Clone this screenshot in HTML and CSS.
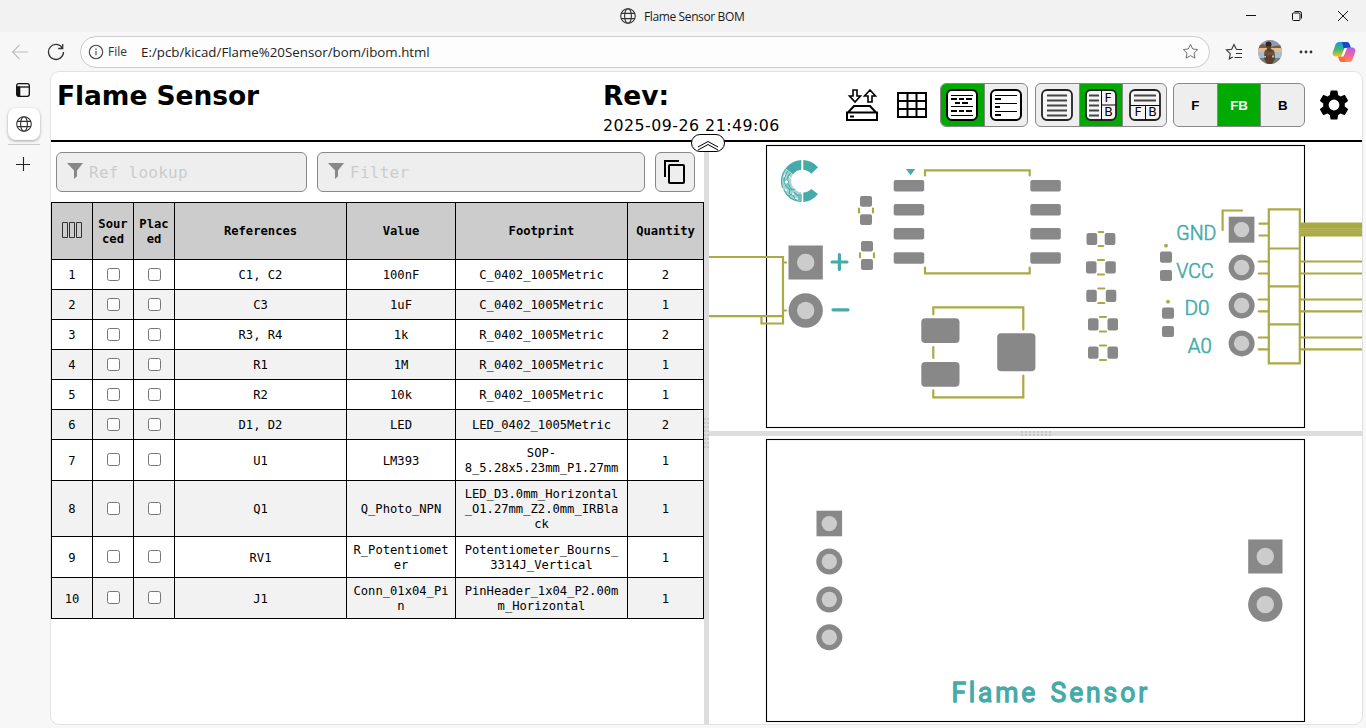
FILE: index.html
```html
<!DOCTYPE html>
<html lang="en">
<head>
<meta charset="utf-8">
<title>Flame Sensor BOM</title>
<link rel="stylesheet" href="styles.css">
</head>
<body>
<svg class="defs" width="0" height="0">
  <defs>
    <symbol id="globe" viewBox="0 0 16 16"><g fill="none" stroke="currentColor" stroke-width="1.1"><circle cx="8" cy="8" r="7.3"/><ellipse cx="8" cy="8" rx="3.4" ry="7.3"/><path d="M1.2 5.4h13.6M1.2 10.6h13.6"/></g></symbol>
    <symbol id="funnel" viewBox="0 0 16 16"><path d="M0 0h16L10 7.6v5.6L7 16V7.6z" fill="#888"/></symbol>
  </defs>
</svg>

<header class="titlebar">
  <div class="tab-title"><svg class="i16"><use href="#globe"/></svg><span>Flame Sensor BOM</span></div>
  <div class="win-buttons">
    <svg viewBox="0 0 12 12"><path d="M1 5.500h10"/></svg>
    <svg viewBox="0 0 12 12"><path d="M1.5 4a1 1 0 0 1 1-1h5.5a1 1 0 0 1 1 1v5.500a1 1 0 0 1-1 1h-5.500a1 1 0 0 1-1-1zM3.500 1.500h5a2 2 0 0 1 2 2v5"/></svg>
    <svg viewBox="0 0 12 12"><path d="M1 1l10 10M11 1L1 11"/></svg>
  </div>
</header>

<nav class="navbar">
  <svg class="back" viewBox="0 0 18 16"><path d="M17 8H1.500M8.500 1L1.500 8l7 7"/></svg>
  <svg class="reload" viewBox="0 0 18 18"><path d="M15.500 5.200A7.500 7.500 0 1 0 16.500 9M15.700 1v4.500h-4.500"/></svg>
  <div class="address">
    <svg class="info" viewBox="0 0 16 16"><circle cx="8" cy="8" r="6.700"/><path d="M8 7v4.200M8 4.600v1.300"/></svg>
    <span class="scheme">File</span>
    <span class="url">E:/pcb/kicad/Flame%20Sensor/bom/ibom.html</span>
    <svg class="star" viewBox="0 0 18 18"><path d="M9 1.400l2.300 4.900 5.300.7-3.900 3.700 1 5.300L9 13.400 4.300 16l1-5.300L1.400 7l5.300-.7z"/></svg>
  </div>
  <svg class="fav" viewBox="0 0 18 18"><path d="M11.500 6.500L9 1.500 6.700 6.300 1.400 7l3.900 3.700-1 5.300 3.500-1.900M11.500 6.500H17M11 10.500h6M9.500 14.500H17"/></svg>
  <svg class="avatar" viewBox="0 0 24 24">
    <clipPath id="face"><circle cx="12" cy="12" r="12"/></clipPath>
    <g clip-path="url(#face)"><rect width="24" height="24" fill="#b9a796"/><rect width="24" height="6" fill="#8f98b5"/><path d="M0 6l5-2 5 3 14-2v4H0z" fill="#715f47"/><rect y="8" width="24" height="4" fill="#e4b98f"/><rect y="12" width="24" height="8" fill="#a9bccd"/><path d="M0 18h24v6H0z" fill="#777c78"/><circle cx="10.500" cy="4.500" r="3" fill="#33231c"/><path d="M9 6h3.500l.5 3 3 1.500 1 8-3 5.500H9l-3-5.500.5-7L9 9z" fill="#5a3f29"/><path d="M7 10l5 2 4-1 1 5-3-1-6 1z" fill="#705034"/><path d="M5.500 16h2.500v1.500H5.500zM14 15.500h2v2h-2z" fill="#9ac2e5"/></g>
  </svg>
  <svg class="dots" viewBox="0 0 14 4"><circle cx="2" cy="2" r="1.400"/><circle cx="7" cy="2" r="1.400"/><circle cx="12" cy="2" r="1.400"/></svg>
  <svg class="copilot" viewBox="0 0 24 22">
    <defs>
      <linearGradient id="ca" x1="0" y1="0" x2="0" y2="1"><stop offset="0" stop-color="#1595f0"/><stop offset=".55" stop-color="#4db86a"/><stop offset="1" stop-color="#f5c713"/></linearGradient>
      <linearGradient id="cb" x1="0" y1="0" x2="0" y2="1"><stop offset="0" stop-color="#a565ef"/><stop offset=".5" stop-color="#f062a5"/><stop offset="1" stop-color="#ff8a4c"/></linearGradient>
    </defs>
    <path d="M7 1h8L9.500 15.500H4C1 15.500 0 13 1 10.500L3.500 3.500Q4.500 1 7 1z" fill="url(#ca)"/>
    <path d="M10 1h5q2 0 2.600 2L19 7h-4q-2 0-3 2z" fill="#1748c5"/>
    <path d="M17 21H9l5.500-14.500H20c3 0 4 2.500 3 5l-2.500 7Q19.500 21 17 21z" fill="url(#cb)"/>
    <path d="M6 15.500h4q1.500 0 2.500-3L13 21H9.500q-2 0-2.500-2.500z" fill="#fb6b3d"/>
    <path d="M12.500 7h2.600L11.500 15.500H9.200z" fill="#fff"/>
  </svg>
</nav>

<div class="workspace">
  <aside class="side">
    <svg class="panel" viewBox="0 0 14 14"><rect x=".7" y=".7" width="12.600" height="12.600" rx="2"/><path d="M.7 4h12.600"/><path class="fill" d="M.7 3.500h3.600v9.800H2a1.300 1.300 0 0 1-1.300-1.300z"/></svg>
    <div class="side-tab"><svg class="i16"><use href="#globe"/></svg></div>
    <div class="side-rule"></div>
    <svg class="plus" viewBox="0 0 14 14"><path d="M7.500 0v14M0 7.500h14"/></svg>
  </aside>

  <main class="page">
    <div class="topbar">
      <div class="doc-title">Flame Sensor</div>
      <div class="rev"><div class="doc-title">Rev:</div><div class="date">2025-09-26 21:49:06</div></div>
      <div class="tools">
        <svg class="save" viewBox="0 0 32 32"><path d="M2 23.500L8 17h16l6 6.500M1 23.500h30V31H1zM4 27.500h4" stroke-width="2"/><path d="M7 1h4v6h3.500L9 13 3.500 7H7zM22 13h4V7h3.500L24 1l-5.500 6H22z" stroke-width="1.600"/></svg>
        <svg class="grid" viewBox="0 0 30 26"><path d="M1 1h28v24H1zM1 9h28M1 17h28M10.500 1v24M19.500 1v24"/></svg>
        <div class="group">
          <div class="btn on"><svg viewBox="0 0 32 32"><rect class="box" x="1" y="1" width="30" height="30" rx="5"/><path d="M5 6.500h22M5 17.500h22M5 26.500h22" stroke-width="1"/><path d="M5 10h6m2 0h5m2 0h6M9 14h5m2 0h6M5 22h6m2 0h5m2 0h6" stroke-width="2"/></svg></div>
          <div class="btn"><svg viewBox="0 0 32 32"><rect class="box" x="1" y="1" width="30" height="30" rx="5"/><path d="M5 6.500h22M5 14.500h22M5 22.500h22" stroke-width="1"/><path d="M5 10h6M5 18h5M5 26h6" stroke-width="2"/></svg></div>
        </div>
        <div class="group g2">
          <div class="btn"><svg viewBox="0 0 32 32"><rect class="box thin" x="1" y="1" width="30" height="30" rx="5"/><path class="gray" d="M6 6.500h20M6 11.500h20M6 16.500h20M6 21.500h20M6 26.500h20"/></svg></div>
          <div class="btn on"><svg viewBox="0 0 32 32"><rect class="box thin" x="1" y="1" width="30" height="30" rx="5"/><path class="gray" d="M4 6.500h10M4 11.500h10M4 16.500h10M4 21.500h10M4 26.500h10"/><path d="M16.500 1v30M16.500 16h14" stroke-width="1"/><text x="19.500" y="13.300">F</text><text x="19.200" y="27.300">B</text></svg></div>
          <div class="btn"><svg viewBox="0 0 32 32"><rect class="box thin" x="1" y="1" width="30" height="30" rx="5"/><path class="gray" d="M5 6.500h22M5 11.500h22"/><path d="M1 16.500h30M16.500 16.500V31" stroke-width="1"/><text x="5.500" y="27.300">F</text><text x="19.200" y="27.300">B</text></svg></div>
        </div>
        <div class="group g3"><div class="btn">F</div><div class="btn on">FB</div><div class="btn">B</div></div>
        <svg class="gear" viewBox="2 2 20 20"><path d="M19.140 12.940c.04-.3.060-.610.060-.940 0-.320-.020-.640-.070-.940l2.030-1.580c.18-.14.230-.41.120-.610l-1.920-3.320c-.12-.22-.37-.29-.59-.22l-2.390.96c-.5-.38-1.030-.7-1.620-.94l-.36-2.540c-.04-.24-.24-.41-.48-.41h-3.840c-.24 0-.43.170-.47.410l-.36 2.540c-.59.240-1.130.570-1.620.940l-2.390-.96c-.22-.08-.47 0-.59.220L2.740 8.870c-.12.210-.08.470.120.610l2.030 1.580c-.05.300-.09.630-.09.940s.020.640.070.940l-2.030 1.580c-.18.140-.23.410-.12.610l1.920 3.320c.12.220.37.290.59.220l2.390-.96c.5.380 1.030.7 1.620.94l.36 2.540c.05.240.24.410.48.410h3.840c.24 0 .44-.17.47-.41l.36-2.540c.59-.24 1.130-.56 1.620-.94l2.390.96c.22.080.47 0 .59-.22l1.920-3.320c.12-.22.070-.47-.12-.61zM12 15.600A3.600 3.600 0 1 1 12 8.400a3.600 3.600 0 0 1 0 7.200z"/></svg>
      </div>
      <div class="collapse"><svg viewBox="0 0 24 12"><path d="M2 8l10-5.500L22 8M2 11l10-5.500L22 11"/></svg></div>
    </div>

    <div class="split">
      <section class="bom">
        <div class="filters">
          <div class="field ref"><svg><use href="#funnel"/></svg><span>Ref lookup</span></div>
          <div class="field filter"><svg><use href="#funnel"/></svg><span>Filter</span></div>
          <div class="copy"><svg viewBox="0 0 24 26"><path d="M2 18V2h14"/><rect x="6" y="6" width="15" height="18" rx="1"/></svg></div>
        </div>
        <table>
          <colgroup><col class="c1"><col class="c1"><col class="c1"><col class="c4"><col class="c5"><col class="c4"><col class="c7"></colgroup>
          <thead><tr><th><svg class="cols" viewBox="0 0 20 16"><path d="M.5.500h5v15h-5zM7.500.500h5v15h-5zM14.500.500h5v15h-5z"/></svg></th><th class="wrap">Sour<br>ced</th><th class="wrap">Plac<br>ed</th><th>References</th><th>Value</th><th>Footprint</th><th>Quantity</th></tr></thead>
          <tbody>
            <tr><td>1</td><td><input type="checkbox"></td><td><input type="checkbox"></td><td>C1, C2</td><td>100nF</td><td>C_0402_1005Metric</td><td>2</td></tr>
            <tr><td>2</td><td><input type="checkbox"></td><td><input type="checkbox"></td><td>C3</td><td>1uF</td><td>C_0402_1005Metric</td><td>1</td></tr>
            <tr><td>3</td><td><input type="checkbox"></td><td><input type="checkbox"></td><td>R3, R4</td><td>1k</td><td>R_0402_1005Metric</td><td>2</td></tr>
            <tr><td>4</td><td><input type="checkbox"></td><td><input type="checkbox"></td><td>R1</td><td>1M</td><td>R_0402_1005Metric</td><td>1</td></tr>
            <tr><td>5</td><td><input type="checkbox"></td><td><input type="checkbox"></td><td>R2</td><td>10k</td><td>R_0402_1005Metric</td><td>1</td></tr>
            <tr><td>6</td><td><input type="checkbox"></td><td><input type="checkbox"></td><td>D1, D2</td><td>LED</td><td>LED_0402_1005Metric</td><td>2</td></tr>
            <tr class="two"><td>7</td><td><input type="checkbox"></td><td><input type="checkbox"></td><td>U1</td><td>LM393</td><td>SOP-<br>8_5.28x5.23mm_P1.27mm</td><td>1</td></tr>
            <tr class="three"><td>8</td><td><input type="checkbox"></td><td><input type="checkbox"></td><td>Q1</td><td>Q_Photo_NPN</td><td>LED_D3.0mm_Horizontal<br>_O1.27mm_Z2.0mm_IRBla<br>ck</td><td>1</td></tr>
            <tr class="two"><td>9</td><td><input type="checkbox"></td><td><input type="checkbox"></td><td>RV1</td><td>R_Potentiomet<br>er</td><td>Potentiometer_Bourns_<br>3314J_Vertical</td><td>1</td></tr>
            <tr class="two"><td>10</td><td><input type="checkbox"></td><td><input type="checkbox"></td><td>J1</td><td>Conn_01x04_Pi<br>n</td><td>PinHeader_1x04_P2.00m<br>m_Horizontal</td><td>1</td></tr>
          </tbody>
        </table>
      </section>
      <div class="gutter v"><i></i></div>
      <section class="boards">
        <svg class="front" viewBox="709 142 653 289">
          <rect class="edge" x="766.500" y="145.500" width="538" height="282"/>
          <!-- photo transistor outline -->
          <g class="silk"><path d="M709 257H783V323.500H761.500V316.200M709 316.200H783M783 262.500h3M783 310.500h3"/></g>
          <!-- SOP-8 outline, potentiometer outline -->
          <g class="silk"><path d="M925 175.500V170.300H1029.700V175.500M925 267.500V273.300H1029.700V267.500M933.300 314.300V307.300H1023.300V329.500M933.300 347V358M933.300 390.300V397.300H1023.300V375.700"/>
          <path d="M859 208.500v4M873 208.500v4M860 253.300v4M874 253.300v4"/>
          <path d="M1098.700 232h4.500M1098.700 246h4.500M1098 260h6M1098 274.500h6M1098.300 288.500h6M1098.300 303h6M1100 317h6M1100 331.500h6M1100 345.500h6M1100 360h6"/></g>
          <!-- pin header -->
          <g class="silk"><path d="M1242 210.500H1222.600V230M1268.800 209.300H1299.800V363.300H1268.800ZM1268.800 248.500h31M1268.800 286.300h31M1268.800 324.300h31"/>
          <path d="M1259.500 223.700h9M1259.500 235.500h9M1258.700 261.500h10M1258.700 273.500h10M1258.700 299.500h10M1258.700 311.300h10M1258.700 337.500h10M1258.700 349.300h10M1299.800 261.500h63M1299.800 273.500h63M1299.800 299.500h63M1299.800 311.300h63M1299.800 337.500h63M1299.800 349.300h63"/></g>
          <rect x="1299" y="222.500" width="64" height="14" fill="#aa4"/>
          <path d="M1299 228.500h64M1299 230.700h64M1299 233h64" stroke="#bcbc6c" stroke-width=".6"/>
          <g fill="#aa4"><circle cx="1166" cy="245.700" r="1.900"/><circle cx="1168" cy="301.700" r="1.900"/></g>
          <g class="pad">
            <rect x="788.500" y="245.500" width="34.300" height="34"/><circle cx="805.700" cy="310.500" r="17.200"/>
            <rect x="860" y="196" width="12" height="10.700" rx="2"/><rect x="860" y="214.300" width="12" height="10.700" rx="2"/><rect x="861" y="241" width="12" height="10.500" rx="2"/><rect x="861" y="259" width="12" height="11" rx="2"/>
            <rect x="893.700" y="180" width="30.500" height="11.500" rx="2"/><rect x="893.700" y="204" width="30.500" height="11.500" rx="2"/><rect x="893.700" y="228" width="30.500" height="11.500" rx="2"/><rect x="893.700" y="252.200" width="30.500" height="11.500" rx="2"/>
            <rect x="1030.300" y="180" width="30.500" height="11.500" rx="2"/><rect x="1030.300" y="204" width="30.500" height="11.500" rx="2"/><rect x="1030.300" y="228" width="30.500" height="11.500" rx="2"/><rect x="1030.300" y="252.200" width="30.500" height="11.500" rx="2"/>
            <rect x="921.300" y="318.300" width="38.200" height="24.700" rx="4"/><rect x="921.300" y="362" width="38.200" height="24.700" rx="4"/><rect x="997.200" y="333.300" width="38.200" height="38" rx="4"/>
            <rect x="1086.500" y="233" width="10.700" height="12" rx="2"/><rect x="1104.700" y="233" width="10.700" height="12" rx="2"/>
            <rect x="1086" y="261.300" width="10.500" height="12.200" rx="2"/><rect x="1105.300" y="261.300" width="10.500" height="12.200" rx="2"/>
            <rect x="1086.300" y="289.700" width="10.500" height="12.200" rx="2"/><rect x="1105.800" y="289.700" width="10.500" height="12.200" rx="2"/>
            <rect x="1088" y="318.200" width="10.500" height="12.200" rx="2"/><rect x="1107.500" y="318.200" width="10.500" height="12.200" rx="2"/>
            <rect x="1088" y="346.600" width="10.500" height="12.200" rx="2"/><rect x="1107.500" y="346.600" width="10.500" height="12.200" rx="2"/>
            <rect x="1160" y="251.600" width="12" height="11.200" rx="2"/><rect x="1160" y="270" width="12" height="11" rx="2"/><rect x="1162" y="307.600" width="12" height="11.200" rx="2"/><rect x="1162" y="326" width="12" height="11" rx="2"/>
            <rect x="1228.700" y="216.700" width="25.700" height="26"/><circle cx="1241.600" cy="267.500" r="13"/><circle cx="1241.600" cy="305.500" r="13"/><circle cx="1241.600" cy="343.400" r="13"/>
          </g>
          <g fill="#ccc"><circle cx="805.700" cy="262.400" r="8.700"/><circle cx="805.700" cy="310.500" r="8.700"/><circle cx="1241.600" cy="229.600" r="7.700"/><circle cx="1241.600" cy="267.500" r="7.700"/><circle cx="1241.600" cy="305.500" r="7.700"/><circle cx="1241.600" cy="343.400" r="7.700"/></g>
          <!-- logo ring -->
          <g fill="#4aa"><path d="M803.300 160a21 21 0 0 1 14.700 7.200l-6.700 6.500a12 12 0 0 0-8-4zM803.300 202a21 21 0 0 0 14.700-8l-6.700-5a12 12 0 0 1-8 3.500z"/>
          <path d="M801.300 160v9.700a12 12 0 0 0-8.300 4.500L785.500 168.500A21 21 0 0 1 801.300 160z"/></g>
          <path d="M801.300 202v-9.500a12 12 0 0 1-8.500-18L785.500 168.500A21 21 0 0 0 801.300 202z" fill="#a6d5d4"/>
          <path d="M785.500 169c-4 6-5 13-3 19M788 171c-3 4-4 7-4 10M790.500 173c-2 2-3 4-3 6M784 190c3 6 9 11 17 11.500M785 185l5 5-1 4M788 184l4 6 3-1M799 194v6M794 192l4 4M789 196l3-2 4 6M801 194v7" fill="none" stroke="#4aa" stroke-width="1.100"/>
          <circle cx="786.300" cy="182" r="2.200" fill="#fff" stroke="#4aa"/><circle cx="793" cy="194" r="1" fill="#fff"/><circle cx="786" cy="190" r="1" fill="#fff"/><path d="M789 176l2 3M795 198l3 1M784 177l1-3" stroke="#fff"/>
          <path d="M906 169h9.200l-4.600 6.300z" fill="#4aa"/>
          <path class="sign" d="M832 262h15M839.400 254.500v15M833 309.800h15"/>
          <g class="label"><text x="1176.300" y="239.500" textLength="40" lengthAdjust="spacingAndGlyphs">GND</text><text x="1176.200" y="277.500" textLength="37.500" lengthAdjust="spacingAndGlyphs">VCC</text><text x="1184.500" y="315.300" textLength="25" lengthAdjust="spacingAndGlyphs">D0</text><text x="1187.800" y="353" textLength="24" lengthAdjust="spacingAndGlyphs">A0</text></g>
        </svg>
        <div class="gutter h"><i></i></div>
        <svg class="rear" viewBox="709 436 653 288">
          <rect class="edge" x="766.500" y="439.500" width="538" height="282"/>
          <g class="pad"><rect x="816.500" y="510.700" width="25.600" height="25.600"/><circle cx="829.300" cy="561.500" r="13"/><circle cx="829.300" cy="599.500" r="13"/><circle cx="829.300" cy="637.300" r="13"/><rect x="1248.200" y="539.500" width="34.300" height="34"/><circle cx="1265.300" cy="604.500" r="17.200"/></g>
          <g fill="#ccc"><circle cx="829.300" cy="523.600" r="7.700"/><circle cx="829.300" cy="561.500" r="7.700"/><circle cx="829.300" cy="599.500" r="7.700"/><circle cx="829.300" cy="637.300" r="7.700"/><circle cx="1265.300" cy="556.500" r="8.700"/><circle cx="1265.300" cy="604.500" r="8.700"/></g>
          <g class="name"><text transform="translate(951.500 702) scale(.93 1)" textLength="90">Flame</text><text transform="translate(1050.500 702) scale(.93 1)" textLength="104">Sensor</text></g>
        </svg>
      </section>
    </div>
  </main>
</div>
</body>
</html>
```
FILE: styles.css
```css
* { box-sizing: border-box; }
body { margin: 0; width: 1366px; height: 728px; overflow: hidden; background: #f7f7f7; font-family: "Open Sans", "Noto Sans", sans-serif; color: #000; display: flex; flex-direction: column; }
svg { display: block; flex: none; fill: none; stroke-linejoin: miter; }
.defs { position: absolute; }
.i16 { width: 16px; height: 16px; color: #333; }

.titlebar { flex: none; height: 32px; background: #f2f2f2; display: flex; align-items: center; padding-left: 620px; justify-content: space-between; }
.tab-title { display: flex; gap: 8px; align-items: center; font-size: 12px; letter-spacing: -.38px; color: #1a1a1a; }
.win-buttons { display: flex; gap: 34px; padding-right: 17px; }
.win-buttons svg { width: 12px; height: 12px; stroke: #111; }

.navbar { flex: none; height: 39px; display: flex; align-items: center; padding: 0 0 0 11px; }
.back { width: 18px; height: 16px; stroke: #bdbdbd; stroke-width: 1.1; }
.reload { width: 18px; height: 18px; margin-left: 18px; stroke: #333; stroke-width: 1.3; }
.address { width: 1130px; height: 32px; margin-left: 15px; border: 1px solid #ccc; border-radius: 16px; background: #fdfdfd; display: flex; align-items: center; padding: 0 10px 0 7px; }
.info { width: 16px; height: 16px; stroke: #444; stroke-width: 1.1; }
.scheme { font-size: 12px; margin-left: 4px; width: 33px; color: #333; }
.url { font-size: 13.3px; color: #222; letter-spacing: 0; flex: 1; }
.star { width: 17px; height: 17px; stroke: #666; }
.fav { width: 18px; height: 18px; margin-left: 15px; stroke: #333; stroke-width: 1.1; }
.avatar { width: 24px; height: 24px; margin-left: 15px; }
.dots { width: 14px; height: 4px; margin-left: 17px; fill: #333; }
.copilot { width: 24px; height: 22px; margin-left: 19px; }

.workspace { flex: none; display: flex; height: 653px; }
.side { width: 50px; display: flex; flex-direction: column; align-items: center; padding: 12px 3px 0 0; }
.panel { width: 14px; height: 14px; stroke: #111; stroke-width: 1.3; margin-right: 1px; }
.panel .fill { fill: #111; stroke: none; }
.side-tab { width: 32px; height: 32px; margin: 11px 0 0 1px; border-radius: 8px; background: #fff; box-shadow: 0 1px 3px rgba(0,0,0,.35); display: flex; align-items: center; justify-content: center; }
.side-rule { width: 32px; height: 1px; background: #ccc; margin: 4px 0 0 1px; }
.plus { width: 14px; height: 14px; margin: 12px 1px 0 0; stroke: #222; stroke-width: 1.1; }

.page { width: 1313px; height: 654px; border: 1px solid #e2e2e2; border-radius: 9px; background: #fff; overflow: hidden; display: flex; flex-direction: column; font-family: "DejaVu Sans", Verdana, sans-serif; }
.topbar { position: relative; flex: none; height: 70px; border-bottom: 2px solid #000; display: flex; padding: 8px 0 0 6px; }
.doc-title { font-weight: bold; font-size: 26.5px; line-height: 32px; letter-spacing: -.07px; width: 546px; }
.rev { width: 242px; }
.rev .doc-title { width: auto; }
.date { font-size: 15.8px; line-height: 19px; margin-top: 4px; letter-spacing: .48px; white-space: nowrap; }
.tools { display: flex; align-items: center; height: 44px; margin-top: 3px; }
.save { width: 32px; height: 32px; stroke: #000; margin-left: 1px; }
.grid { width: 30px; height: 26px; stroke: #000; stroke-width: 2; margin: 0 13px 0 19px; }
.group { display: flex; height: 44px; width: 88px; border: 1px solid #888; border-radius: 6px; overflow: hidden; background: #eee; }
.g2 { margin: 0 6px 0 7px; width: 132px; }
.g3 { width: 132px; }
.btn { flex: 1; display: flex; align-items: center; justify-content: center; font: bold 13.3px "Liberation Sans", sans-serif; border-left: 1px solid #888; }
.btn:first-child { border-left: 0; }
.btn.on { background: #0a0; color: #fff; }
.btn svg { width: 32px; height: 32px; stroke: #000; }
.btn .box { fill: #fff; stroke-width: 2; }
.btn .thin { fill: #f5f5f5; stroke: #222; stroke-width: 1.8; }
.btn .gray { stroke: #444; stroke-width: 1.8; }
.btn text { fill: #000; stroke: none; font: 12.5px "DejaVu Sans", sans-serif; }
.gear { width: 30px; height: 30px; fill: #000; margin-left: 14px; }
.collapse { position: absolute; left: 640px; top: 62px; width: 34px; height: 18px; background: #fff; border: 1px solid #000; border-radius: 9px; display: flex; justify-content: center; align-items: flex-end; z-index: 2; }
.collapse svg { width: 24px; height: 12px; stroke: #000; stroke-width: 1; }

.split { display: flex; flex: none; height: 582px; }
.bom { width: 653px; }
.filters { display: flex; gap: 10px; padding: 10px 0 10px 5px; height: 60px; }
.field { height: 40px; background: #eee; border: 1px solid #888; border-radius: 6px; display: flex; align-items: center; gap: 6px; padding-left: 10px; font: 16px "DejaVu Sans Mono", monospace; letter-spacing: .25px; color: #ccc; }
.field svg { width: 16px; height: 16px; margin-bottom: 3px; }
.ref { width: 251px; }
.filter { width: 328px; }
.copy { width: 40px; height: 40px; background: #eee; border: 1px solid #888; border-radius: 6px; display: flex; align-items: center; justify-content: center; }
.copy svg { width: 24px; height: 26px; stroke: #000; stroke-width: 2; }

table { table-layout: fixed; width: 653px; border-collapse: separate; border-spacing: 0; border: solid #000; border-width: 1px 0 0 1px; font: 12.17px/15px "DejaVu Sans Mono", monospace; text-align: center; }
.c1 { width: 41px; } .c4 { width: 172px; } .c5 { width: 109px; } .c7 { width: 76px; }
th, td { border: solid #000; border-width: 0 1px 1px 0; padding: 0; vertical-align: middle; white-space: nowrap; }
th { height: 57px; background: #ccc; }
th.wrap { padding-top: 2px; }
td { height: 30px; padding-top: 2px; }
.two td { height: 41px; }
.three td { height: 56px; }
tbody tr:nth-child(even) { background: #f2f2f2; }
.cols { width: 20px; height: 16px; margin: -3px auto 0; stroke: #333; }
input { display: block; width: 13px; height: 13px; margin: -2px auto 0; }
.two input { margin-top: -3px; }

.gutter { flex: none; background: #ddd; display: flex; align-items: center; justify-content: center; }
.gutter.v { width: 5px; }
.gutter.h { height: 5px; }
.v i { width: 5px; height: 30px; background: repeating-linear-gradient(90deg, transparent 0 2px, #ddd 2px 3px), repeating-linear-gradient(0deg, #c8c8c8 0 2px, #ddd 2px 4px); }
.h i { width: 30px; height: 5px; background: repeating-linear-gradient(0deg, transparent 0 2px, #ddd 2px 3px), repeating-linear-gradient(90deg, #c8c8c8 0 2px, #ddd 2px 4px); }

.boards { width: 653px; display: flex; flex-direction: column; }
.front { width: 653px; height: 289px; }
.rear { width: 653px; height: 288px; }
.edge { stroke: #000; stroke-width: 1.1; }
.silk path { stroke: #aa4; stroke-width: 2.2; stroke-linecap: round; }
.pad { fill: #888; }
.sign { stroke: #4aa; stroke-width: 3.2; stroke-linecap: round; }
.label { fill: #4aa; stroke: #4aa; stroke-width: .6; stroke-linejoin: round; font: 300 20.5px "Roboto", sans-serif; }
.name { fill: #4aa; stroke: #4aa; stroke-width: 1.3; stroke-linejoin: round; font: 400 28.5px "Roboto", sans-serif; }
```
